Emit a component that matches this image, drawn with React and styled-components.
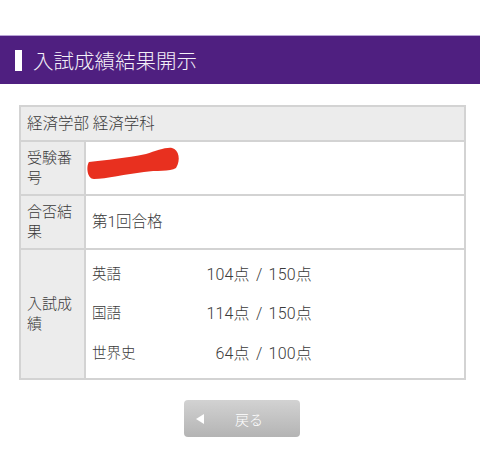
import React from "react";
import styled, { createGlobalStyle } from "styled-components";

const GlobalStyle = createGlobalStyle`
  html, body {
    margin: 0;
    padding: 0;
    background: #ffffff;
  }
  body {
    font-family: Roboto, "Noto Sans CJK JP", "Noto Sans", sans-serif;
    color: #3a3a3a;
  }
`;

const Page = styled.div`
  width: 480px;
  padding-top: 35px;
`;

const TitleBar = styled.div`
  height: 48px;
  background-color: #4f1f80;
  border-top: 1px solid #b8a3d6;
  display: flex;
  align-items: center;
  padding-left: 15px;
  gap: 11px;
  color: #ffffff;
`;

const TitleMark = styled.span`
  width: 7px;
  height: 21px;
  background: #ffffff;
`;

const TitleText = styled.h1`
  margin: 0;
  font-size: 20.5px;
  font-weight: 300;
  color: #f4f0f8;
`;

const Table = styled.table`
  margin: 21px 14px 0 19px;
  width: 447px;
  border-collapse: collapse;
  border: 2px solid #d3d3d3;
  font-size: 15.5px;
  font-weight: 300;
`;

const Cell = styled.td`
  border: 2px solid #d3d3d3;
  padding: 0 6px;
  background: ${(p) => (p.$shade ? "#ececec" : "#ffffff")};
  line-height: 20px;
  height: ${(p) => p.$h}px;
  vertical-align: middle;
  text-align: left;
`;

const Label = styled(Cell)`
  width: 51px;
  background: #ececec;
  font-size: 15px;
`;

const Redact = styled.svg`
  display: block;
  margin: -10px 0 0 -6px;
`;

const Scores = styled.div`
  display: grid;
  grid-template-columns: 80px 140px;
  row-gap: 19.5px;
  font-size: 14.5px;
`;

const Subject = styled.span``;

const Score = styled.span`
  text-align: right;
  font-size: 16px;
  letter-spacing: 0.2px;
  word-spacing: 2px;
`;

const ButtonRow = styled.div`
  display: flex;
  justify-content: center;
  padding: 20px 0 0 4px;
`;

const BackButton = styled.button`
  width: 116px;
  height: 37px;
  border: none;
  border-radius: 4px;
  background: linear-gradient(#d2d2d2, #b4b4b4);
  color: #ffffff;
  font-family: inherit;
  font-size: 14px;
  font-weight: 300;
  display: flex;
  align-items: center;
  padding: 0 0 0 12px;
  gap: 31px;
`;

const Arrow = styled.span`
  width: 0;
  height: 0;
  border-top: 5px solid transparent;
  border-bottom: 5px solid transparent;
  border-right: 8px solid #ffffff;
`;

const scores = [
  { subject: "英語", score: "104点 / 150点" },
  { subject: "国語", score: "114点 / 150点" },
  { subject: "世界史", score: "64点 / 100点" },
];

export default function App() {
  return (
    <Page>
      <GlobalStyle />
      <TitleBar>
        <TitleMark />
        <TitleText>入試成績結果開示</TitleText>
      </TitleBar>
      <Table>
        <tbody>
          <tr>
            <Cell colSpan={2} $shade $h={33}>
              経済学部 経済学科
            </Cell>
          </tr>
          <tr>
            <Label $h={52}>受験番号</Label>
            <Cell $h={52}>
              <Redact width="96" height="34" viewBox="0 0 96 34">
                <path
                  d="M3 16 C20 14 40 12 60 8 C70 5 80 1 86 2 C93 4 95 14 90 22 C84 26 70 24 58 26 C40 28 20 33 8 33 C1 33 0 20 3 16 Z"
                  fill="#e8301f"
                />
              </Redact>
            </Cell>
          </tr>
          <tr>
            <Label $h={52}>合否結果</Label>
            <Cell $h={52}>第1回合格</Cell>
          </tr>
          <tr>
            <Label $h={128}>入試成績</Label>
            <Cell $h={128}>
              <Scores>
                {scores.map((s) => (
                  <React.Fragment key={s.subject}>
                    <Subject>{s.subject}</Subject>
                    <Score>{s.score}</Score>
                  </React.Fragment>
                ))}
              </Scores>
            </Cell>
          </tr>
        </tbody>
      </Table>
      <ButtonRow>
        <BackButton>
          <Arrow />
          戻る
        </BackButton>
      </ButtonRow>
    </Page>
  );
}
